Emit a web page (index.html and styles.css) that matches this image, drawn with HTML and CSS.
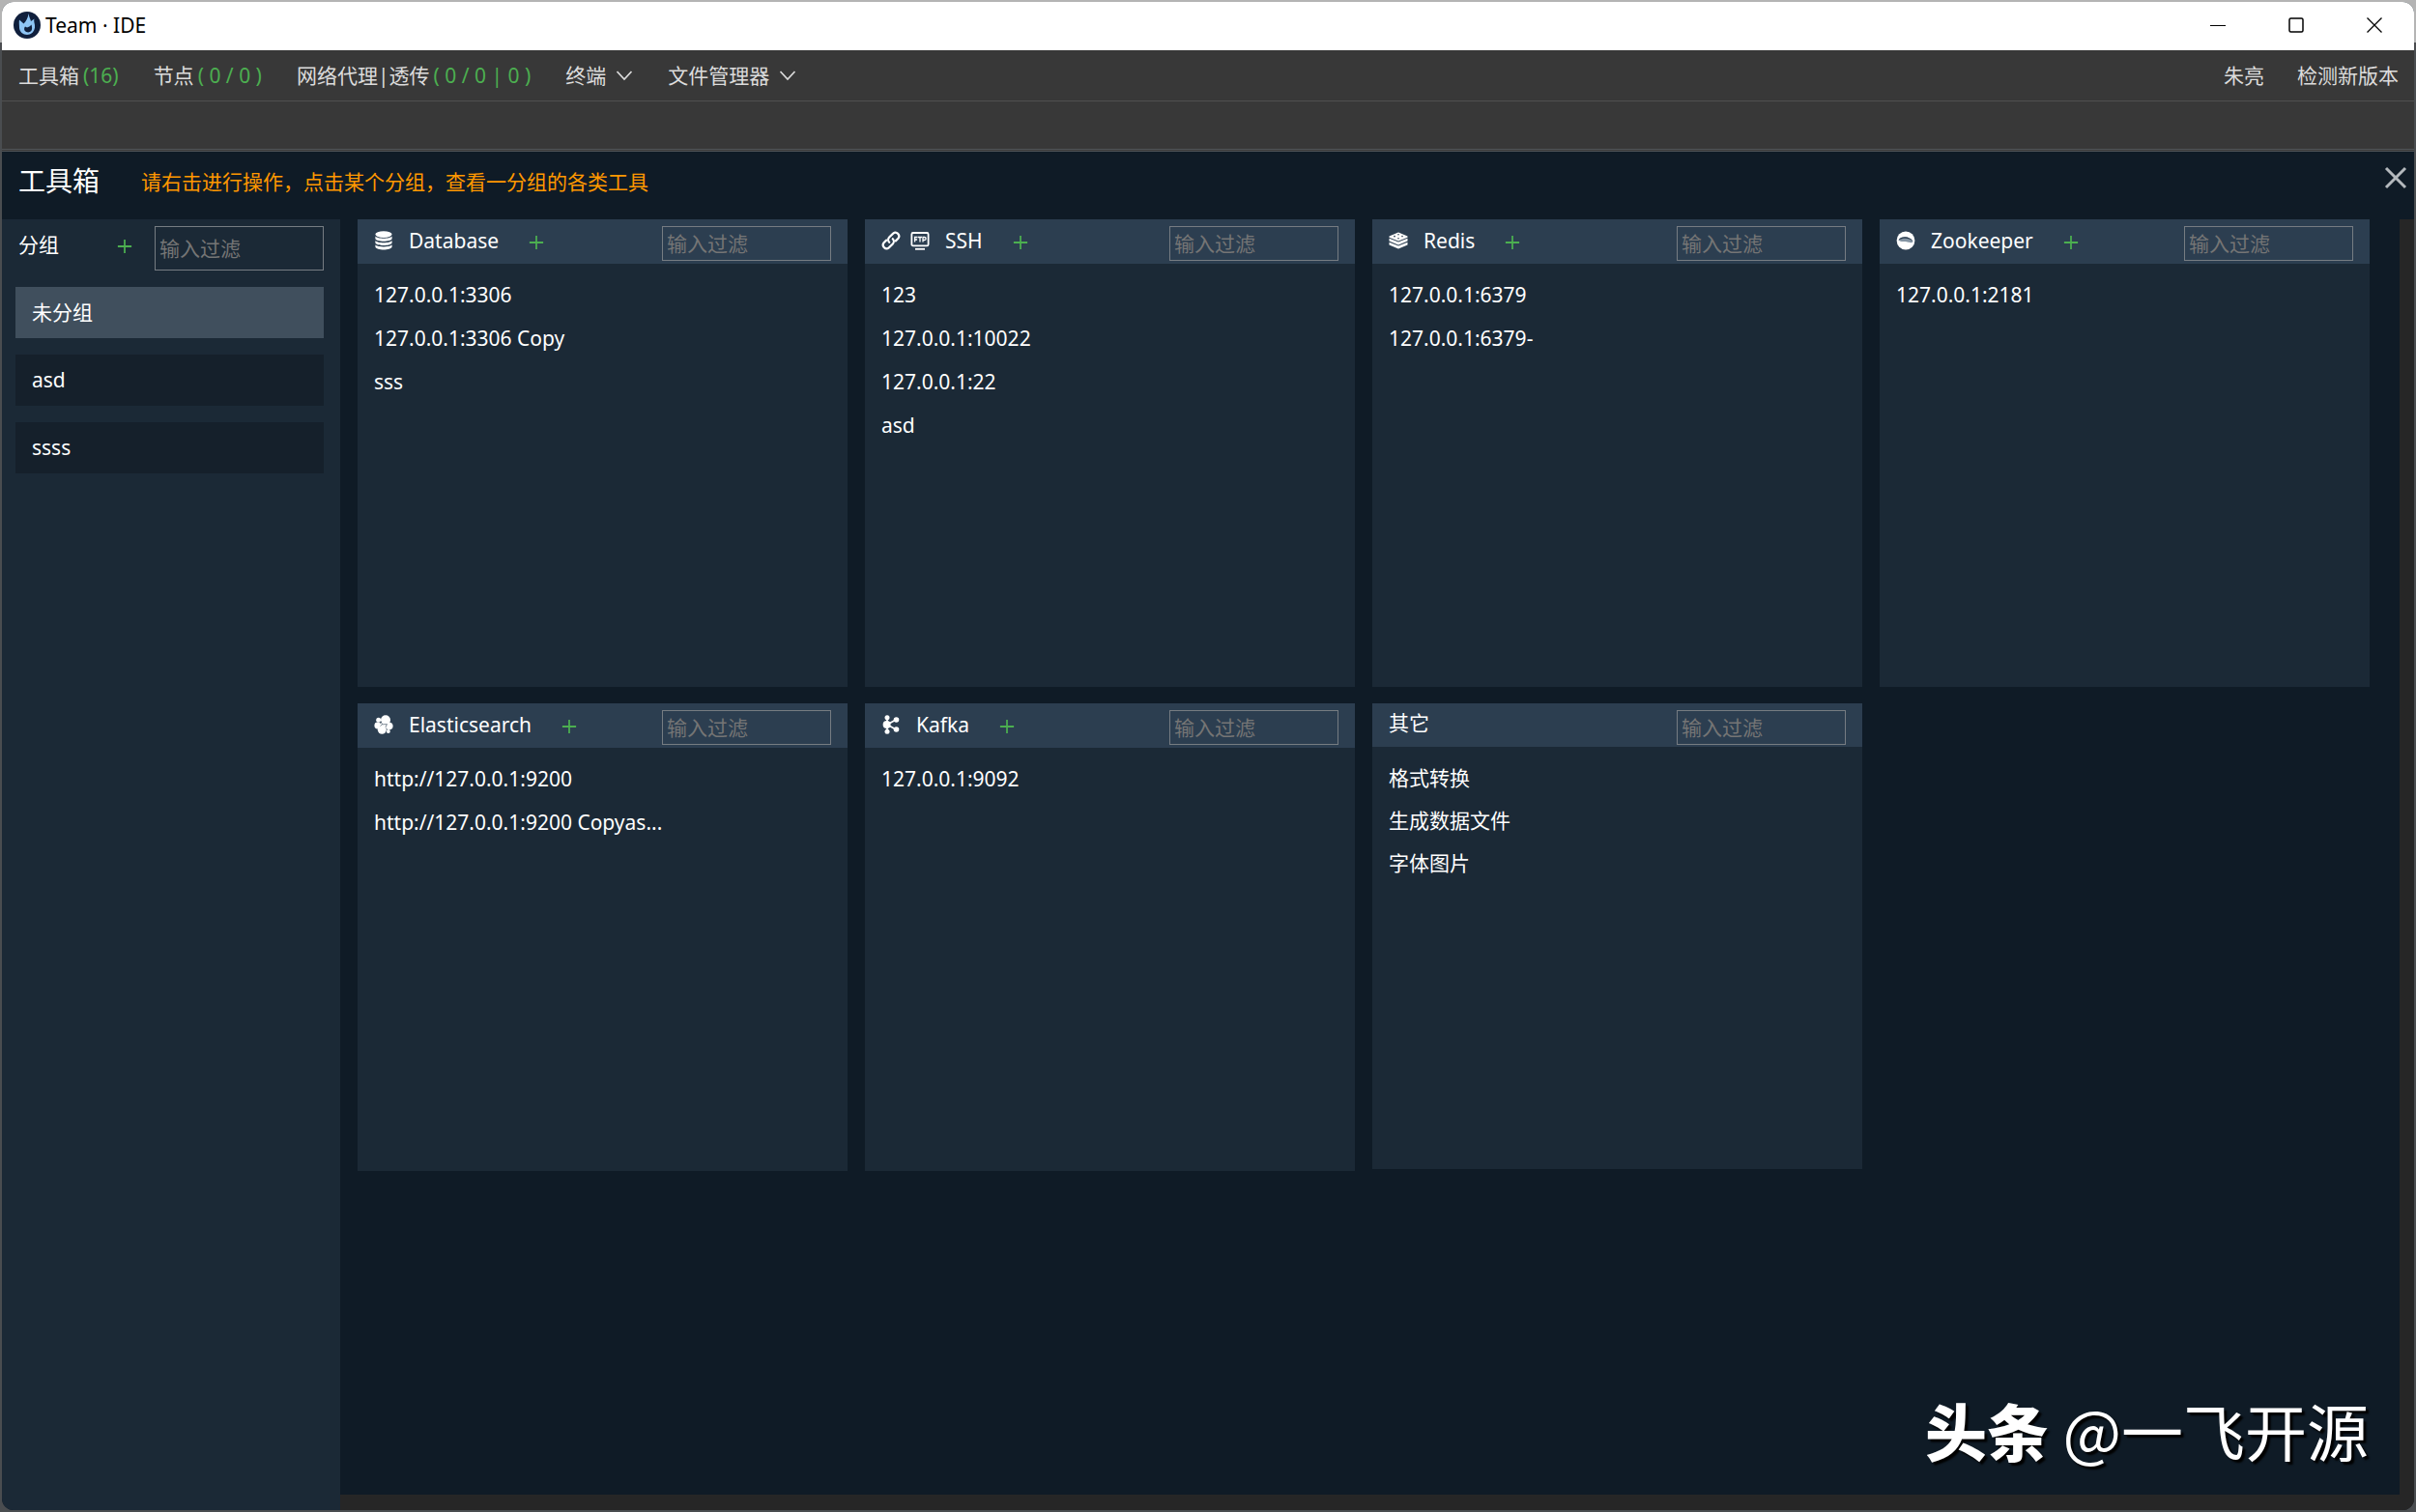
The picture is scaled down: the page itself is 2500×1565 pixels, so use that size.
FILE: index.html
```html
<!DOCTYPE html>
<html lang="zh-CN">
<head>
<meta charset="utf-8">
<title>Team · IDE</title>
<link rel="stylesheet" href="styles.css">
</head>
<body>
<svg class="sprite" aria-hidden="true">
  <symbol id="i-plus" viewBox="0 0 18 18"><path d="M9 1v16M1 9h16" fill="none" stroke="currentColor" stroke-width="2"/></symbol>
  <symbol id="i-down" viewBox="0 0 18 18"><path d="M1.500 5l7.500 8 7.500-8" fill="none" stroke="currentColor" stroke-width="1.700"/></symbol>
  <symbol id="i-close" viewBox="0 0 24 24"><path d="M2 2l20 20M22 2L2 22" fill="none" stroke="currentColor" stroke-width="3"/></symbol>
  <symbol id="i-db" viewBox="0 0 20 20"><g fill="currentColor"><ellipse cx="10" cy="3.600" rx="8.600" ry="3.300"/><path d="M1.400 5.600c2 3 15.200 3 17.200 0v2.600c-1 3.300-16.200 3.300-17.200 0z"/><path d="M1.400 10c2 3 15.200 3 17.200 0v2.400c-1 3.300-16.200 3.300-17.200 0z"/><path d="M1.400 14.200c2 3 15.200 3 17.200 0v2.400c-1 4-16.200 4-17.200 0z"/></g></symbol>
  <symbol id="i-link" viewBox="0 0 20 20"><g fill="none" stroke="currentColor" stroke-width="2.200" stroke-linecap="round"><path d="M8.200 11.800a3.700 3.700 0 0 1 0-5.200l4-4a3.700 3.700 0 0 1 5.200 5.200l-2.600 2.600"/><path d="M11.800 8.200a3.700 3.700 0 0 1 0 5.200l-4 4a3.700 3.700 0 0 1-5.200-5.200l2.600-2.600"/></g></symbol>
  <symbol id="i-ftp" viewBox="0 0 20 20"><g fill="none" stroke="currentColor"><rect x="1.400" y="2" width="17.200" height="13.400" rx="1.500" stroke-width="1.800"/><path d="M5 18.800h10" stroke-width="1.800"/><path d="M4.600 11.500v-5h3M4.600 9h2.500M8 6.500h4M10 6.500v5M13 11.500v-5h1.600a1.400 1.400 0 0 1 0 3H13" stroke-width="1.300"/></g></symbol>
  <symbol id="i-redis" viewBox="0 0 20 20"><g fill="currentColor"><path d="M10 1.500L19.500 5.500v1.200L10 10.600.5 6.700V5.500z"/><path d="M.5 7.700L10 11.600l9.500-3.900v2.900L10 14.500.5 10.600z"/><path d="M.5 11.700L10 15.600l9.500-3.900v2.800L10 18.500.5 14.500z"/></g><g fill="#2c3e50"><circle cx="10" cy="3.800" r=".8"/><circle cx="6" cy="5.600" r=".9"/><circle cx="14" cy="5.600" r=".8"/><circle cx="10" cy="7.800" r=".8"/></g></symbol>
  <symbol id="i-zk" viewBox="0 0 20 20"><circle cx="10" cy="10" r="9.400" fill="currentColor"/><path d="M2.500 9.500c2.500-4.500 12-4.500 15 1.500-1 2-4 .8-5.500.5-3-.5-7 .5-9.500-2z" fill="#8494a3"/><path d="M2.500 9.500c2.500-4.500 12-4.500 15 1.500-4-4-10-3.800-15-1.500z" fill="#2c3e50"/></symbol>
  <symbol id="i-es" viewBox="0 0 20 20"><g fill="currentColor"><circle cx="12" cy="5.300" r="5"/><circle cx="4.700" cy="5.200" r="2.500"/><circle cx="3.800" cy="11" r="3.400"/><circle cx="8.300" cy="15.300" r="4.500"/><circle cx="15.800" cy="11.600" r="3.800"/><circle cx="14.800" cy="17" r="2"/><circle cx="9.500" cy="10.200" r="3"/></g><path d="M7 6.500l1.500 3.300M8.500 9.800l5-.2M6.500 11.500l2-1.700M12 12.500l1.500-2.900" stroke="#2c3e50" stroke-width=".6" fill="none"/></symbol>
  <symbol id="i-kafka" viewBox="0 0 20 20"><path d="M6 3v14M6 10l9-5M6 10l9 5" stroke="currentColor" stroke-width="1.700"/><g fill="currentColor"><circle cx="6" cy="2.700" r="2.500"/><circle cx="5.600" cy="10" r="4"/><circle cx="6" cy="17.300" r="2.500"/><circle cx="15.500" cy="5" r="2.800"/><circle cx="15.500" cy="15" r="2.800"/></g></symbol>
</svg>
<div class="window">
  <header class="titlebar">
    <svg class="logo" viewBox="0 0 28 28"><circle cx="14" cy="14" r="14" fill="#101f3c"/><path d="M15.500 2c.5 3.500 2 5.500 2.500 8l3.500-2.500c-1 3 1 5 .5 9-.5 4.500-4 7.500-8 7.500s-8-3-8-7.500c0-3-.5-5 0-8l4.500 4c2.500-2.500 4.500-6 5-10.500z" fill="#8ec5f5"/><path d="M18.500 13.500c.5 2 1 4 .2 5.800-1.200 2.600-5.200 2.800-6.900.7-1.200-1.800-.6-3.500.2-4.500l2 1c1.500-.5 3.500-1.500 4.500-3z" fill="#101f3c"/></svg>
    <span class="app-name">Team · IDE</span>
    <div class="win-buttons">
      <button aria-label="最小化"><svg viewBox="0 0 16 16"><path d="M0 8.500h16" stroke="#000" stroke-width="1"/></svg></button>
      <button aria-label="最大化"><svg viewBox="0 0 16 16"><rect x="1" y="1" width="14" height="14" rx="1.500" fill="none" stroke="#000" stroke-width="1.500"/></svg></button>
      <button aria-label="关闭"><svg viewBox="0 0 16 16"><path d="M.5.5l15 15M15.500.5l-15 15" stroke="#000" stroke-width="1.300"/></svg></button>
    </div>
  </header>
  <nav class="menubar">
    <a href="#">工具箱<span class="count">(16)</span></a>
    <a href="#">节点<span class="count">( 0 / 0 )</span></a>
    <a href="#">网络代理|透传<span class="count">( 0 / 0 | 0 )</span></a>
    <a href="#">终端<svg class="chev"><use href="#i-down"/></svg></a>
    <a href="#">文件管理器<svg class="chev"><use href="#i-down"/></svg></a>
    <a href="#" class="user">朱亮</a>
    <a href="#">检测新版本</a>
  </nav>
  <div class="tabbar"></div>
  <main class="toolbox">
    <div class="toolbox-head">
      <h1>工具箱</h1>
      <p>请右击进行操作，点击某个分组，查看一分组的各类工具</p>
      <button class="close" aria-label="关闭工具箱"><svg><use href="#i-close"/></svg></button>
    </div>
    <div class="toolbox-body">
      <aside class="groups">
        <div class="groups-head">
          <h2>分组</h2>
          <button class="add" aria-label="新增分组"><svg><use href="#i-plus"/></svg></button>
          <input type="text" placeholder="输入过滤" aria-label="过滤分组">
        </div>
        <ul>
          <li class="active">未分组</li>
          <li>asd</li>
          <li>ssss</li>
        </ul>
      </aside>
      <div class="scroller">
        <div class="cards">
          <section class="card">
            <header><svg class="icon"><use href="#i-db"/></svg><h3>Database</h3><button class="add" aria-label="新增 Database"><svg><use href="#i-plus"/></svg></button><input type="text" placeholder="输入过滤" aria-label="过滤 Database"></header>
            <ul><li>127.0.0.1:3306</li><li>127.0.0.1:3306 Copy</li><li>sss</li></ul>
          </section>
          <section class="card">
            <header><svg class="icon"><use href="#i-link"/></svg><svg class="icon"><use href="#i-ftp"/></svg><h3>SSH</h3><button class="add" aria-label="新增 SSH"><svg><use href="#i-plus"/></svg></button><input type="text" placeholder="输入过滤" aria-label="过滤 SSH"></header>
            <ul><li>123</li><li>127.0.0.1:10022</li><li>127.0.0.1:22</li><li>asd</li></ul>
          </section>
          <section class="card">
            <header><svg class="icon"><use href="#i-redis"/></svg><h3>Redis</h3><button class="add" aria-label="新增 Redis"><svg><use href="#i-plus"/></svg></button><input type="text" placeholder="输入过滤" aria-label="过滤 Redis"></header>
            <ul><li>127.0.0.1:6379</li><li>127.0.0.1:6379-</li></ul>
          </section>
          <section class="card">
            <header><svg class="icon"><use href="#i-zk"/></svg><h3>Zookeeper</h3><button class="add" aria-label="新增 Zookeeper"><svg><use href="#i-plus"/></svg></button><input type="text" placeholder="输入过滤" aria-label="过滤 Zookeeper"></header>
            <ul><li>127.0.0.1:2181</li></ul>
          </section>
          <section class="card">
            <header><svg class="icon"><use href="#i-es"/></svg><h3>Elasticsearch</h3><button class="add" aria-label="新增 Elasticsearch"><svg><use href="#i-plus"/></svg></button><input type="text" placeholder="输入过滤" aria-label="过滤 Elasticsearch"></header>
            <ul><li>http://127.0.0.1:9200</li><li>http://127.0.0.1:9200 Copyas...</li></ul>
          </section>
          <section class="card">
            <header><svg class="icon"><use href="#i-kafka"/></svg><h3>Kafka</h3><button class="add" aria-label="新增 Kafka"><svg><use href="#i-plus"/></svg></button><input type="text" placeholder="输入过滤" aria-label="过滤 Kafka"></header>
            <ul><li>127.0.0.1:9092</li></ul>
          </section>
          <section class="card other">
            <header><h3>其它</h3><input type="text" placeholder="输入过滤" aria-label="过滤其它"></header>
            <ul><li>格式转换</li><li>生成数据文件</li><li>字体图片</li></ul>
          </section>
        </div>
      </div>
    </div>
  </main>
  <div class="watermark"><b>头条</b> @一飞开源</div>
</div>
</body>
</html>
```
FILE: styles.css
```css
* { box-sizing: border-box; }
body {
  margin: 0;
  min-height: 100vh;
  display: flex;
  padding: 2px;
  background: linear-gradient(#b4b4b4 0 44px, #4a4d50 44px);
  color: #fff;
  font: 21px/30px "Noto Sans", "Noto Sans CJK SC", sans-serif;
}
h1, h2, h3, p, ul { margin: 0; padding: 0; font: inherit; }
ul { list-style: none; }
a { color: inherit; text-decoration: none; }
button { padding: 0; border: 0; background: none; color: inherit; font: inherit; cursor: pointer; }
svg { display: block; flex: none; }
.sprite { position: absolute; width: 0; height: 0; }

.window {
  position: relative;
  flex: 1;
  display: flex;
  flex-direction: column;
  border-radius: 12px;
  overflow: hidden;
  background: #0f1b26;
}
.titlebar {
  display: flex;
  align-items: center;
  height: 50px;
  padding: 0 33px 2px 12px;
  background: #fff;
  color: #000;
}
.logo { width: 28px; height: 28px; }
.app-name { margin-left: 5px; }
.win-buttons { display: flex; gap: 65px; margin-left: auto; }
.win-buttons svg { width: 16px; height: 16px; }

.menubar {
  display: flex;
  align-items: center;
  gap: 36px;
  height: 53px;
  padding: 0 16px 0 17px;
  background: #383838;
  border-bottom: 1px solid #505050;
  color: #dcdcdc;
}
.menubar a { display: flex; align-items: center; }
.count { margin-left: 4px; color: #4caf50; }
.chev { width: 18px; height: 18px; margin-left: 10px; }
.menubar .user { margin: 0 -2px 0 auto; }
.tabbar { height: 52px; background: #383838; border-bottom: 3px double #505458; }

.toolbox { flex: 1; display: flex; flex-direction: column; }
.toolbox-head { display: flex; align-items: center; height: 70px; padding: 0 7px 10px 17px; }
.toolbox-head h1 { font-size: 28px; }
.toolbox-head p { margin-left: 43px; padding-top: 2px; color: #ff9800; }
.close { margin: 0 0 6px auto; color: #b4b9bd; }
.close svg { width: 24px; height: 24px; }

.toolbox-body { flex: 1; display: flex; }
.groups { width: 350px; padding: 7px 17px 0 14px; background: #1b2936; }
.groups-head { display: flex; }
.groups-head h2 { margin: 4px auto 0 3px; }
.groups-head .add { margin: 13px 23px 0 0; align-self: flex-start; }
.groups-head input { height: 46px; }
.groups li {
  height: 53px;
  margin-top: 17px;
  padding-left: 17px;
  line-height: 53px;
  background: #15202b;
}
.groups li.active { background: #404f5d; }

.add { color: #4caf50; }
.add svg { width: 16px; height: 16px; }
input {
  width: 175px;
  height: 36px;
  padding: 0 4px;
  border: 1px solid #767c82;
  border-radius: 0;
  outline: 0;
  background: none;
  color: #fff;
  font: inherit;
}
input::placeholder { color: #757575; opacity: 1; }

.scroller { flex: 1; border: solid #262626; border-width: 0 15px 16px 0; }
.cards {
  display: grid;
  grid-template-columns: repeat(4, 1fr);
  gap: 17px 18px;
  padding: 0 31px 0 18px;
}
.card { height: 484px; background: #1b2936; }
.card.other { height: 482px; }
.card header {
  display: flex;
  align-items: flex-start;
  height: 46px;
  padding: 7px 17px 0;
  background: #2c3e50;
}
.card .icon { width: 20px; height: 20px; margin: 5px 10px 0 0; }
.card h3 { margin-left: 6px; }
.card .add { margin: 9px 0 0 31px; }
.card input { margin-left: auto; }
.card ul { padding: 10px 17px; }
.card li { height: 45px; line-height: 45px; }
.card.other header { height: 45px; padding-top: 5px; }
.card.other h3 { margin-left: 0; }
.card.other input { margin-top: 2px; }
.card.other li { height: 44px; line-height: 44px; }

.watermark {
  position: absolute;
  right: 47px;
  bottom: 42px;
  font-size: 64px;
  line-height: 84px;
  font-family: "Noto Sans CJK SC", sans-serif;
  text-shadow: 3px 3px 2px #000;
}
.watermark b { font-weight: 900; }
```
